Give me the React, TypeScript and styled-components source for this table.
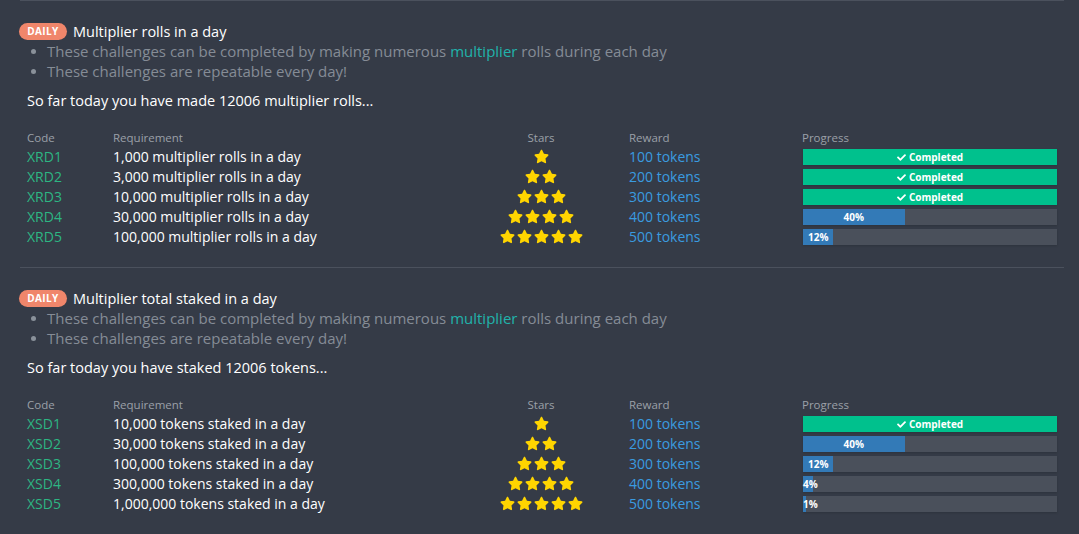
import React from "react";
import styled, { createGlobalStyle } from "styled-components";
import { FaStar, FaCheck } from "react-icons/fa";

const Global = createGlobalStyle`
  html, body { margin: 0; padding: 0; background: #353b47; }
  body { font-family: "Open Sans", "Liberation Sans", sans-serif; color: #fff; }
`;

const Page = styled.div`
  padding: 0 15px 20px 20px;
  background: #353b47;
  min-height: 534px;
  box-sizing: border-box;
`;

const Section = styled.section`
  border-top: 1px solid #4b515d;
  padding-top: 20px;
  padding-bottom: 21px;
`;

const TitleRow = styled.div`
  display: flex;
  align-items: center;
  gap: 6px;
  height: 20px;
  margin-left: -1px;
`;

const Badge = styled.span`
  display: inline-flex;
  align-items: center;
  justify-content: center;
  width: 48px;
  height: 17px;
  border-radius: 9px;
  background: #f0866b;
  color: #fff;
  font-size: 10px;
  font-weight: 700;
  letter-spacing: 0.4px;
`;

const Title = styled.span`
  font-size: 14.5px;
  color: #fff;
`;

const Bullets = styled.ul`
  margin: 0;
  padding: 0 0 0 27px;
  list-style: none;
  color: #858c96;
  font-size: 15px;
  line-height: 20px;
`;

const Bullet = styled.li`
  &::before {
    content: "";
    display: inline-block;
    width: 5px;
    height: 5px;
    border-radius: 50%;
    background: #8a919a;
    margin-left: -16px;
    margin-right: 11px;
    vertical-align: 3px;
  }
`;

const Link = styled.span`
  color: #21b3ab;
`;

const SoFar = styled.p`
  margin: 10px 0 0 7px;
  font-size: 14.5px;
  line-height: 20px;
`;

const cols = "86px 340px 176px 173px 255px";

const Table = styled.div`
  margin: 17px 7px 0 7px;
  display: grid;
  grid-template-columns: ${cols};
`;

const HeadCell = styled.div<{ $center?: boolean }>`
  height: 18px;
  line-height: 19px;
  font-size: 11.5px;
  color: #9ba0a8;
  text-align: ${(p) => (p.$center ? "center" : "left")};
`;

const Cell = styled.div<{ $color?: string }>`
  height: 20px;
  display: flex;
  align-items: center;
  font-size: 14px;
  color: ${(p) => p.$color || "#fff"};
`;

const StarCell = styled(Cell)`
  justify-content: center;
  gap: 2px;
  color: #ffd500;
`;

const BarCell = styled(Cell)`
  padding-left: 1px;
`;

const Track = styled.div`
  width: 100%;
  height: 16px;
  margin-top: 1px;
  background: #4a505b;
  box-shadow: 0 1px 2px rgba(0, 0, 0, 0.15);
`;

const Fill = styled.div<{ $done?: boolean }>`
  height: 100%;
  background: ${(p) => (p.$done ? "#00c18d" : "#337ab7")};
  text-align: center;
  line-height: 16px;
  color: #fff;
  font-size: 10px;
  font-weight: 700;
  white-space: nowrap;
  overflow: visible;
  svg { vertical-align: -1px; margin-right: 3px; }
`;

type Row = { code: string; req: string; stars: number; reward: string; pct: number };

const Progress: React.FC<{ pct: number }> = ({ pct }) => (
  <Track>
    {pct >= 100 ? (
      <Fill $done style={{ width: "100%" }}>
        <FaCheck size={9} />Completed
      </Fill>
    ) : (
      <Fill style={{ width: `${pct}%` }}>{pct}%</Fill>
    )}
  </Track>
);

const Challenge: React.FC<{ title: string; sofar: string; rows: Row[] }> = ({ title, sofar, rows }) => (
  <Section>
    <TitleRow>
      <Badge>DAILY</Badge>
      <Title>{title}</Title>
    </TitleRow>
    <Bullets>
      <Bullet>
        These challenges can be completed by making numerous <Link>multiplier</Link> rolls during each day
      </Bullet>
      <Bullet>These challenges are repeatable every day!</Bullet>
    </Bullets>
    <SoFar>{sofar}</SoFar>
    <Table>
      <HeadCell>Code</HeadCell>
      <HeadCell>Requirement</HeadCell>
      <HeadCell $center>Stars</HeadCell>
      <HeadCell>Reward</HeadCell>
      <HeadCell>Progress</HeadCell>
      {rows.map((r) => (
        <React.Fragment key={r.code}>
          <Cell $color="#2db683">{r.code}</Cell>
          <Cell>{r.req}</Cell>
          <StarCell>
            {Array.from({ length: r.stars }).map((_, i) => (
              <FaStar key={i} size={15} />
            ))}
          </StarCell>
          <Cell $color="#3a9be0">{r.reward}</Cell>
          <BarCell>
            <Progress pct={r.pct} />
          </BarCell>
        </React.Fragment>
      ))}
    </Table>
  </Section>
);

const rolls: Row[] = [
  { code: "XRD1", req: "1,000 multiplier rolls in a day", stars: 1, reward: "100 tokens", pct: 100 },
  { code: "XRD2", req: "3,000 multiplier rolls in a day", stars: 2, reward: "200 tokens", pct: 100 },
  { code: "XRD3", req: "10,000 multiplier rolls in a day", stars: 3, reward: "300 tokens", pct: 100 },
  { code: "XRD4", req: "30,000 multiplier rolls in a day", stars: 4, reward: "400 tokens", pct: 40 },
  { code: "XRD5", req: "100,000 multiplier rolls in a day", stars: 5, reward: "500 tokens", pct: 12 },
];

const staked: Row[] = [
  { code: "XSD1", req: "10,000 tokens staked in a day", stars: 1, reward: "100 tokens", pct: 100 },
  { code: "XSD2", req: "30,000 tokens staked in a day", stars: 2, reward: "200 tokens", pct: 40 },
  { code: "XSD3", req: "100,000 tokens staked in a day", stars: 3, reward: "300 tokens", pct: 12 },
  { code: "XSD4", req: "300,000 tokens staked in a day", stars: 4, reward: "400 tokens", pct: 4 },
  { code: "XSD5", req: "1,000,000 tokens staked in a day", stars: 5, reward: "500 tokens", pct: 1 },
];

export default function App() {
  return (
    <Page>
      <Global />
      <Challenge title="Multiplier rolls in a day" sofar="So far today you have made 12006 multiplier rolls..." rows={rolls} />
      <Challenge title="Multiplier total staked in a day" sofar="So far today you have staked 12006 tokens..." rows={staked} />
    </Page>
  );
}
